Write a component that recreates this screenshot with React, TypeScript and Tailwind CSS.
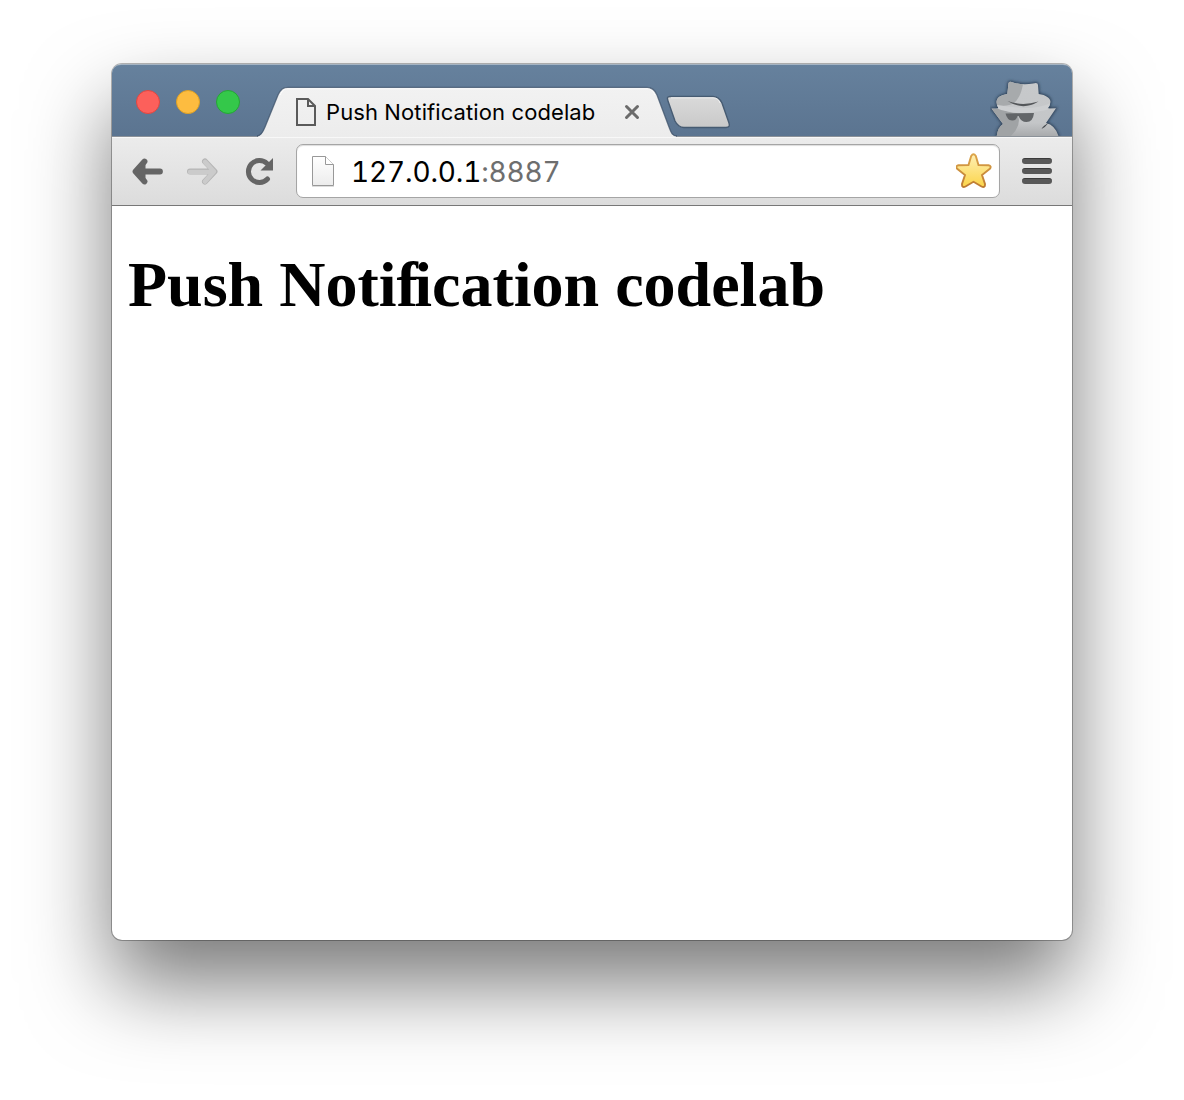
function WindowControls() {
  return (
    <div className="ml-6 mt-[26px] flex gap-4">
      <span className="size-6 rounded-full border border-[#e2463f] bg-[#fc605b]" />
      <span className="size-6 rounded-full border border-[#dfa023] bg-[#fdbc40]" />
      <span className="size-6 rounded-full border border-[#25a635] bg-[#34c84a]" />
    </div>
  );
}

function Tab() {
  return (
    <div className="relative ml-4 mt-[22px] flex h-[51px] w-[425px] shrink-0 items-center">
      <svg className="absolute inset-0" width="425" height="51" viewBox="0 0 425 51" fill="none">
        <defs>
          <linearGradient id="tabFill" x1="0" y1="0" x2="0" y2="1">
            <stop offset="0" stopColor="#f2f2f2" />
            <stop offset="1" stopColor="#ececec" />
          </linearGradient>
        </defs>
        <path
          d="M2 51V50C5 50 7 46 9 41L22 9C25 3 27 1.5 32 1.5H391C396 1.5 399 4 401 9L413 41C415 46 416 50 420 50V51Z"
          fill="url(#tabFill)"
        />
        <path
          d="M1 50C5 50 7 46 9 41L22 9C25 3 27 1.5 32 1.5H391C396 1.5 399 4 401 9L413 41C415 46 416 50 421 50"
          stroke="#3e5269"
          strokeOpacity=".75"
          strokeWidth="1.3"
        />
        <path d="M24 9C27 4 28 2.7 32 2.7H391C395 2.7 397 5 399 9" stroke="#fff" />
      </svg>
      <svg className="relative ml-[39px]" width="22" height="28" viewBox="0 0 22 28" fill="none" stroke="#5a5a5a" strokeWidth="2">
        <path d="M2 1H13L20 8V27H2Z" />
        <path d="M13 1V8H20" />
      </svg>
      <span className="relative ml-[9px] w-[274px] whitespace-nowrap font-['Inter',sans-serif] text-[22px] leading-7 tracking-[0.1px] text-black">
        Push Notification codelab
      </span>
      <svg className="relative ml-[22px]" width="20" height="20" viewBox="0 0 20 20" stroke="#6b6b6b" strokeWidth="3" strokeLinecap="round">
        <path d="M4.500 4.500L15.500 15.500M15.500 4.500L4.500 15.500" />
      </svg>
    </div>
  );
}

function NewTabButton() {
  return (
    <svg className="-ml-[16px] mt-[30px] shrink-0" width="66" height="36" viewBox="0 0 66 36" fill="none">
      <defs>
        <linearGradient id="newTab" x1="0" y1="0" x2="0" y2="1">
          <stop offset="0" stopColor="#dadada" />
          <stop offset="1" stopColor="#c9c9c9" />
        </linearGradient>
      </defs>
      <path
        d="M5 2.5H48C53 2.5 55 5 57 9L64 29C65 32 64 33.5 61 33.5H19C14 33.5 12 31 10 27L3 7C2 4 2 2.5 5 2.5Z"
        fill="url(#newTab)"
        stroke="#465b72"
        strokeWidth="1.4"
      />
      <path d="M6 3.8H48C52 3.8 54 6 55 9" stroke="#f0f0f0" />
    </svg>
  );
}

const FIGURE_OUTLINE =
  "M18.500 13Q19.500 11 23 12.500Q33 15.500 43 13.500Q48 12 48 15L48.700 24C56 25 60.500 28 60.500 32Q60 36 57.500 38.500L66 38.300L56 53Q65 55 68.500 66H6.700Q8 57 13 54L1.500 38.500L8.500 38.500Q6.500 35 6.500 32C7 27 11 25 17.300 24Z";

function IncognitoFigure() {
  return (
    <svg className="ml-auto mr-[10px] mt-1.5 shrink-0" width="72" height="66" viewBox="0 0 72 66">
      <defs>
        <linearGradient id="coat" x1="0" y1="0" x2="0" y2="1">
          <stop offset="0" stopColor="#c8cacc" />
          <stop offset=".8" stopColor="#c4c6c8" />
          <stop offset="1" stopColor="#a9abad" />
        </linearGradient>
        <clipPath id="figureClip">
          <path d={FIGURE_OUTLINE} />
        </clipPath>
        <filter id="figureGlow" x="-20%" y="-20%" width="140%" height="140%">
          <feGaussianBlur stdDeviation="1.8" />
        </filter>
      </defs>
      <path d={FIGURE_OUTLINE} fill="#2d4157" stroke="#2d4157" strokeWidth="2" filter="url(#figureGlow)" />
      <g clipPath="url(#figureClip)">
        <rect width="72" height="66" fill="url(#coat)" />
        <path d="M0 0H34C34 18 30 28 24 33Q18 37 6 35H0Z" fill="#a7aaac" />
        <path d="M0 39H12Q20 43 27 43L29 50Q29 58 21 66H0Z" fill="#a0a3a5" />
        <path d="M6 35Q20 37 34 38Q50 38 61 33L59 39Q50 42 32 43Q18 43 6 38Z" fill="#cdcfd1" />
      </g>
      <path d="M17.500 31Q32 36.500 48.500 31.500Q33 41 17.500 31Z" fill="#54575a" />
      <path d="M15.500 43.500L44 43Q43 52 36.500 52Q31 52 28.500 46L27.500 46Q26 51 22 50.500Q17 50 15.500 43.500Z" fill="#626568" />
      <path d="M51.500 59Q53 55.500 60.500 52L57.500 54Q56 56.500 51.500 59Z" fill="#44484d" />
    </svg>
  );
}

function TabStrip() {
  return (
    <div className="-mb-px flex h-[73px] items-start rounded-t-[9px] border-t border-[#a5b4c3] bg-linear-to-b from-[#66819d] to-[#5b7490]">
      <div className="-mt-px flex h-[72px] w-full items-start">
        <WindowControls />
        <Tab />
        <NewTabButton />
        <IncognitoFigure />
      </div>
    </div>
  );
}

function BackIcon() {
  return (
    <svg width="32" height="30" viewBox="0 0 32 30" fill="none" stroke="#656565" strokeWidth="5.800" strokeLinecap="round" strokeLinejoin="round">
      <path d="M5 15.500H28M12.500 5.500L3.500 15.500L12.500 25.500" />
      <path d="M5 15.500L13.500 6.500V24.500Z" fill="#656565" strokeWidth="0" />
    </svg>
  );
}

function ForwardIcon() {
  return (
    <svg width="32" height="30" viewBox="0 0 32 30" fill="none" strokeLinecap="round" strokeLinejoin="round">
      <path d="M3 15.500H26M18 5.500L27.500 15.500L18 25.500" stroke="#b5b5b5" strokeWidth="6" />
      <path d="M3 15.900H26M18 5.900L27 15.500L18 25.500" stroke="#cbcbcb" strokeWidth="4.500" />
    </svg>
  );
}

function ReloadIcon() {
  return (
    <svg width="30" height="30" viewBox="0 0 30 30" fill="none">
      <path d="M22.500 23A11 11 0 1 1 22 7.500" stroke="#656565" strokeWidth="5" strokeLinecap="round" />
      <path d="M28 2V14.500H15.500Z" fill="#656565" />
    </svg>
  );
}

function PageIcon() {
  return (
    <svg width="24" height="32" viewBox="0 0 24 32">
      <defs>
        <linearGradient id="paper" x1="0" y1="0" x2="0" y2="1">
          <stop offset="0" stopColor="#fff" />
          <stop offset="1" stopColor="#ececec" />
        </linearGradient>
      </defs>
      <path d="M1 31.500H23" stroke="#ddd" />
      <path d="M1.500 1.500H14.500L22.500 9.500V30.500H1.500Z" fill="url(#paper)" stroke="#989898" />
      <path d="M14.500 1.500V9.500H22.500" fill="#fff" stroke="#989898" />
    </svg>
  );
}

function StarIcon() {
  return (
    <svg width="36" height="36" viewBox="0 0 36 36">
      <defs>
        <linearGradient id="star" x1="0" y1="0" x2="0" y2="1">
          <stop offset="0" stopColor="#fff0b5" />
          <stop offset="1" stopColor="#fbd449" />
        </linearGradient>
        <linearGradient id="starEdge" x1="0" y1="0" x2="0" y2="1">
          <stop offset="0" stopColor="#dca449" />
          <stop offset="1" stopColor="#bd7b32" />
        </linearGradient>
      </defs>
      <path
        d="M15.200 3Q17.500 -.5 19.800 3L22.500 12L32.500 12.200Q36 13 33.800 15.800L26 22L29 31Q29.200 35.200 25.500 33.500L17.500 28.800L9.500 33.500Q5.800 35.200 6 31L9 22L1.200 15.800Q-1 13 2.500 12.200L12.500 12Z"
        fill="url(#star)"
        stroke="url(#starEdge)"
        strokeWidth="1.900"
      />
    </svg>
  );
}

function MenuIcon() {
  return (
    <div className="flex w-[30px] flex-col gap-1">
      <span className="h-1.5 rounded-full border-t border-[#3c3c3c] bg-[#585858]" />
      <span className="h-1.5 rounded-full border-t border-[#3c3c3c] bg-[#585858]" />
      <span className="h-1.5 rounded-full border-t border-[#3c3c3c] bg-[#585858]" />
    </div>
  );
}

function Toolbar() {
  return (
    <div className="flex h-[70px] items-center border-b border-[#777] bg-linear-to-b from-[#ececec] to-[#dcdcdc] pl-5 shadow-[inset_0_1px_#8c9299,inset_0_2px_#f8f8f8]">
      <BackIcon />
      <div className="ml-[23px]">
        <ForwardIcon />
      </div>
      <div className="ml-[26px]">
        <ReloadIcon />
      </div>
      <div className="ml-[21px] flex h-[54px] w-[704px] items-center rounded-[7px] border border-[#a5a5a5] bg-white pl-3.5 pr-[7px] shadow-[inset_0_1px_1px_#ddd]">
        <PageIcon />
        <span className="ml-4 mt-0.5 whitespace-nowrap font-['Inter',sans-serif] text-[28px] leading-8 tracking-[-0.15px] tabular-nums text-black">
          127.0.0.1<span className="text-[#6e6e6e]">:8887</span>
        </span>
        <div className="ml-auto">
          <StarIcon />
        </div>
      </div>
      <div className="ml-[22px]">
        <MenuIcon />
      </div>
    </div>
  );
}

export default function App() {
  return (
    <div className="h-[1100px] w-[1184px] overflow-hidden bg-white pl-28 pt-16">
      <div className="flex h-[876px] w-[960px] flex-col rounded-[10px] bg-white shadow-[0_0_0_1px_rgba(0,0,0,0.28),0_44px_84px_rgba(0,0,0,0.53)]">
        <TabStrip />
        <Toolbar />
        <main className="grow pl-4 pt-[42px]">
          <h1 className="whitespace-nowrap font-['Liberation_Serif',serif] text-[64px] font-bold leading-[74px] text-black">
            Push Noti<span className="tracking-[-3.500px]">f</span>ication codelab
          </h1>
        </main>
      </div>
    </div>
  );
}
